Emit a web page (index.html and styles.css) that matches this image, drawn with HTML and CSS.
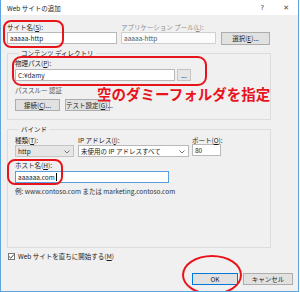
FILE: index.html
```html
<!DOCTYPE html>
<html lang="ja">
<head>
    <meta charset="UTF-8">
    <title>Web サイトの追加</title>
    <link rel="stylesheet" href="styles.css">
</head>
<body>
    <div class="dialog">
        <div class="titlebar">
            <span class="title">Web サイトの追加</span>
            <span class="tbtn help">?</span>
            <span class="tbtn close">✕</span>
        </div>
        <div class="main">
            <div class="row1">
                <div class="field site">
                    <div class="label">サイト名(<u>S</u>):</div>
                    <div class="input">aaaaa-http</div>
                </div>
                <div class="field pool">
                    <div class="label gray">アプリケーション プール(<u>L</u>):</div>
                    <div class="input disabled">aaaaa-http</div>
                </div>
                <div class="btn select">選択(<u>E</u>)...</div>
            </div>

            <fieldset class="group content_dir">
                <legend>コンテンツ ディレクトリ</legend>
                <div class="label">物理パス(<u>P</u>):</div>
                <div class="pathrow">
                    <div class="input path">C:¥damy</div>
                    <div class="btn dots">...</div>
                </div>
                <div class="label pass">パススルー 認証</div>
                <div class="btnrow">
                    <div class="btn small">接続(<u>C</u>)...</div>
                    <div class="btn small">テスト設定(<u>G</u>)...</div>
                </div>
            </fieldset>

            <fieldset class="group bind">
                <legend>バインド</legend>
                <div class="bindrow">
                    <div class="field type">
                        <div class="label">種類(<u>T</u>):</div>
                        <div class="input combo">http
                            <svg class="chev" width="6" height="4" viewBox="0 0 6 4"><polyline points="0.5,0.5 3,3 5.5,0.5" fill="none" stroke="#666" stroke-width="0.9"/></svg>
                        </div>
                    </div>
                    <div class="field ip">
                        <div class="label">IP アドレス(<u>I</u>):</div>
                        <div class="input combo">未使用の IP アドレスすべて
                            <svg class="chev" width="6" height="4" viewBox="0 0 6 4"><polyline points="0.5,0.5 3,3 5.5,0.5" fill="none" stroke="#666" stroke-width="0.9"/></svg>
                        </div>
                    </div>
                    <div class="field port">
                        <div class="label">ポート(<u>O</u>):</div>
                        <div class="input">80</div>
                    </div>
                </div>
                <div class="label host_label">ホスト名(<u>H</u>):</div>
                <div class="input host">aaaaaa.com<span class="caret"></span></div>
                <div class="label example">例: www.contoso.com または marketing.contoso.com</div>
            </fieldset>

            <div class="checkrow">
                <span class="checkbox">
                    <svg width="7" height="7" viewBox="0 0 7 7"><polyline points="1.2,3.6 2.8,5.2 5.8,1.6" fill="none" stroke="#333" stroke-width="0.9"/></svg>
                </span>
                <span class="label">Web サイトを直ちに開始する(<u>M</u>)</span>
            </div>

            <div class="footer">
                <div class="btn ok">OK</div>
                <div class="btn cancel">キャンセル</div>
            </div>
        </div>

        <!-- 赤い注釈 -->
        <div class="mark m_site"></div>
        <div class="mark m_path"></div>
        <div class="mark m_host"></div>
        <div class="mark m_ok"></div>
        <div class="note">空のダミーフォルダを指定</div>
    </div>
</body>
</html>
```

FILE: styles.css
```css
*{
    margin:0;
    padding:0;
    box-sizing:border-box;
}
body{
    width:300px;
    height:292px;
    background-color:#fff;
    font-family:"Noto Sans CJK JP","Noto Sans",sans-serif;
    font-size:6.5px;
    color:#1a1a1a;
}
u{
    text-decoration:underline;
}
.dialog{
    position:relative;
    width:299px;
    height:292px;
    background-color:#f0f0f0;
    border:1px solid #5ea5e0;
    border-top:none;
    overflow:hidden;
}
.titlebar{
    display:flex;
    align-items:center;
    height:15px;
    background-color:#fff;
    padding-left:6px;
}
.title{
    flex:1;
    color:#222;
}
.tbtn{
    color:#444;
    font-family:"DejaVu Sans",sans-serif;
    font-size:7px;
}
.help{
    margin-right:19px;
}
.close{
    margin-right:9px;
}
.main{
    padding:8px 5px 0 6px;
}
.label{
    line-height:9px;
    white-space:nowrap;
}
.gray{
    color:#8c8c8c;
}
.input{
    height:12px;
    line-height:10px;
    padding-left:2px;
    background-color:#fff;
    border:1px solid #b9b9b9;
    white-space:nowrap;
    overflow:hidden;
}
.disabled{
    background-color:#fbfbfb;
    border-color:#d0d0d0;
    color:#555;
}
.btn{
    height:12px;
    line-height:10px;
    text-align:center;
    background-color:#e1e1e1;
    border:1px solid #adadad;
    white-space:nowrap;
}
.row1{
    display:flex;
}
.site{
    width:110px;
    margin-right:4px;
}
.pool{
    width:95px;
    margin-right:5px;
}
.select{
    width:49px;
    height:13px;
    margin-top:9px;
}
.group{
    border:1px solid #dcdcdc;
    min-width:0;
    width:264px;
}
.group legend{
    margin-left:4px;
    padding:0 2px;
    line-height:8px;
}
.content_dir{
    margin-top:4px;
    padding:2px 7px 8px 7px;
}
.pathrow{
    display:flex;
    margin-top:1px;
}
.path{
    width:160px;
    margin-right:2px;
}
.dots{
    width:14px;
    background-color:#e6e6e6;
    border-color:#c4c4c4;
}
.pass{
    margin-top:5px;
    color:#555;
}
.btnrow{
    display:flex;
    margin-top:4px;
}
.small{
    width:45px;
    margin-right:5px;
}
.bind{
    margin-top:5px;
    padding:3px 7px 51px 7px;
}
.bindrow{
    display:flex;
}
.type{
    width:59px;
    margin-right:4px;
}
.ip{
    width:111px;
    margin-right:3px;
}
.port{
    width:29px;
}
.port .input{
    margin-top:-1px;
}
.combo{
    position:relative;
    background-color:#fff;
}
.type .combo{
    background-color:#e6e6e6;
    border-color:#c4c4c4;
}
.chev{
    position:absolute;
    right:3px;
    top:4px;
}
.host_label{
    margin-top:4px;
}
.host{
    width:154px;
    margin-top:1px;
    border-color:#5a9ede;
}
.caret{
    display:inline-block;
    width:1px;
    height:8px;
    margin-left:1px;
    vertical-align:-1px;
    background-color:#000;
}
.example{
    margin-top:4px;
    color:#333;
}
.checkrow{
    display:flex;
    align-items:center;
    margin-top:4px;
    margin-left:1px;
}
.checkbox{
    display:block;
    width:7px;
    height:7px;
    margin-right:3px;
    background-color:#fff;
    border:1px solid #777;
}
.checkbox svg{
    display:block;
    margin:-1px 0 0 -1px;
}
.footer{
    display:flex;
    justify-content:flex-end;
    margin-top:12px;
}
.ok{
    width:46px;
    margin-right:5px;
    border-color:#0078d7;
}
.cancel{
    width:50px;
}
.mark{
    position:absolute;
    border:2px solid #e8141b;
    border-radius:8px;
}
.m_site{
    left:2px;
    top:20px;
    width:61px;
    height:28px;
}
.m_path{
    left:11px;
    top:56px;
    width:195px;
    height:30px;
    border-radius:9px;
}
.m_host{
    left:6px;
    top:159px;
    width:56px;
    height:26px;
}
.m_ok{
    left:181px;
    top:255px;
    width:60px;
    height:40px;
    border-radius:50%;
}
.note{
    position:absolute;
    left:96px;
    top:86px;
    font-size:14.5px;
    line-height:16px;
    font-weight:bold;
    color:#e8141b;
    white-space:nowrap;
}
```
